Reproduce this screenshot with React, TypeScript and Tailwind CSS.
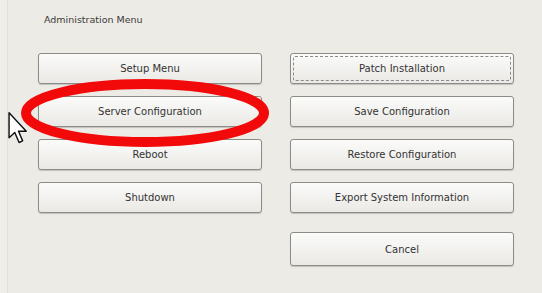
import React from "react";

const leftButtons = ["Setup Menu", "Server Configuration", "Reboot", "Shutdown"];
const rightButtons = [
  "Patch Installation",
  "Save Configuration",
  "Restore Configuration",
  "Export System Information",
];

const MenuButton = ({
  label,
  focused = false,
  tall = false,
}: {
  label: string;
  focused?: boolean;
  tall?: boolean;
}) => (
  <button
    className={
      (tall ? "h-[34px] " : "h-[31px] ") +
      "relative w-full rounded-[3px] border border-[#8d8b86] bg-gradient-to-b from-[#fbfbfa] to-[#eae9e5] text-[10px] text-[#333333] shadow-[0_1px_1px_rgba(0,0,0,0.18)]"
    }
  >
    {focused && (
      <span className="pointer-events-none absolute inset-[2px] rounded-[2px] border border-dashed border-[#8a8a8a]" />
    )}
    <span className="relative">{label}</span>
  </button>
);

export default function App() {
  return (
    <div
      className="relative flex h-[293px] w-[542px] overflow-hidden bg-[#edebe6]"
      style={{ fontFamily: '"DejaVu Sans", "Liberation Sans", sans-serif' }}
    >
      {/* left edge strip */}
      <div className="h-full w-[8px] border-r border-[#e3e1db] bg-[#efeee9]" />

      <div className="flex-1">
        {/* Title */}
        <div className="pl-[36px] pt-[13px] text-[9.5px] leading-[14px] text-[#3a3a3a]">
          Administration Menu
        </div>

        {/* Buttons */}
        <div className="ml-[30px] mt-[26px] grid w-[476px] grid-cols-2 gap-x-[28px]">
          <div className="flex flex-col gap-[12px]">
            {leftButtons.map((b) => (
              <MenuButton key={b} label={b} />
            ))}
          </div>
          <div className="flex flex-col gap-[12px]">
            {rightButtons.map((b, i) => (
              <MenuButton key={b} label={b} focused={i === 0} />
            ))}
            <div className="mt-[7px]">
              <MenuButton label="Cancel" tall />
            </div>
          </div>
        </div>
      </div>

      {/* Red annotation ellipse */}
      <svg className="pointer-events-none absolute left-0 top-0" width="542" height="293">
        <ellipse cx="145" cy="113" rx="119" ry="29" fill="none" stroke="#f20a0a" strokeWidth="10" />
      </svg>

      {/* Mouse pointer */}
      <svg className="pointer-events-none absolute left-[7px] top-[111px]" width="22" height="34" viewBox="0 0 12 19">
        <path
          d="M1 1 L1 15 L4.2 12 L6.6 17.6 L8.6 16.7 L6.3 11.3 L10.6 11.3 Z"
          fill="#ffffff"
          stroke="#111111"
          strokeWidth="0.8"
          strokeLinejoin="round"
        />
      </svg>
    </div>
  );
}
